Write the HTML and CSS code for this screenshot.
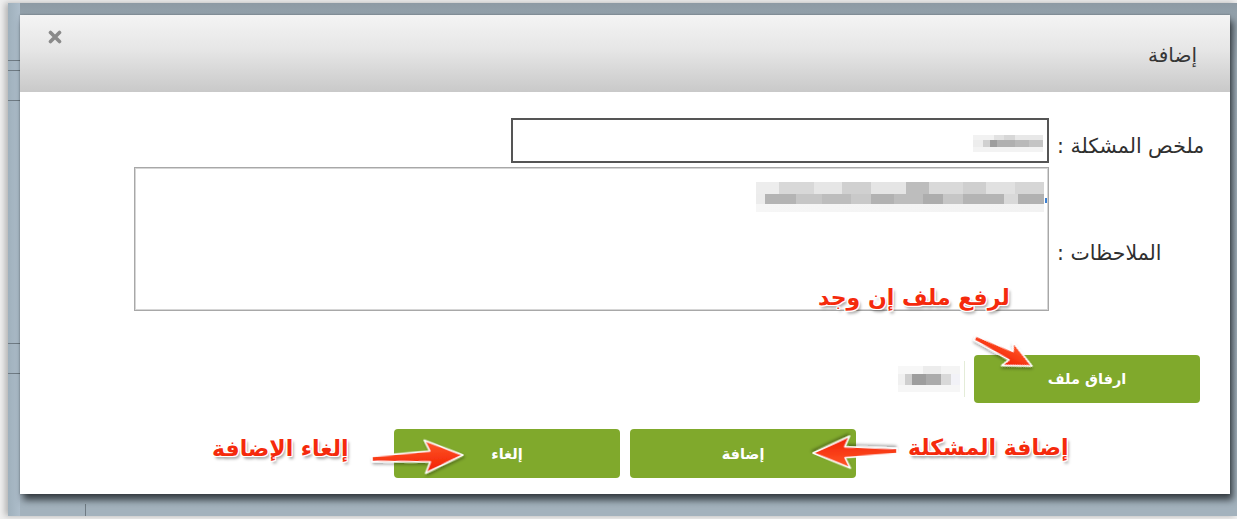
FILE: index.html
```html
<!DOCTYPE html>
<html lang="ar">
<head>
<meta charset="utf-8">
<title>إضافة</title>
<link rel="stylesheet" href="styles.css">
</head>
<body>
<div class="screen">
  <div class="modal" dir="rtl">
    <div class="modal-header">
      <h4 class="modal-title">إضافة</h4>
      <button class="close" type="button" aria-label="إغلاق">
        <svg width="14" height="14" viewBox="0 0 14 14"><path d="M2.5 2.5 L11.5 11.5 M11.5 2.5 L2.5 11.5" stroke="#8a8a8a" stroke-width="3.6" stroke-linecap="round"/></svg>
      </button>
    </div>
    <div class="modal-body">
      <div class="form-grid">
        <label class="form-label">ملخص المشكلة :</label>
        <div class="field">
          <div class="input"><span class="redacted redacted-short"></span></div>
        </div>
        <label class="form-label form-label-notes">الملاحظات :</label>
        <div class="field">
          <div class="textarea"><span class="redacted redacted-long"></span><span class="caret"></span></div>
        </div>
      </div>
      <div class="attach-row">
        <button class="btn btn-green" type="button">ارفاق ملف</button>
        <span class="file-name"><span class="redacted redacted-file"></span></span>
      </div>
      <div class="actions">
        <button class="btn btn-green" type="button">إضافة</button>
        <button class="btn btn-green" type="button">إلغاء</button>
      </div>
    </div>
  </div>
</div>

<!-- callout notes drawn over the dialog -->
<div class="note note-upload" dir="rtl">لرفع ملف إن وجد</div>
<div class="note note-add" dir="rtl">إضافة المشكلة</div>
<div class="note note-cancel" dir="rtl">إلغاء الإضافة</div>

<svg class="arrows" width="1237" height="519" viewBox="0 0 1237 519">
  <defs>
    <linearGradient id="arrowFill" x1="0" y1="0" x2="0" y2="1">
      <stop offset="0" stop-color="#ff5a2a"/>
      <stop offset="1" stop-color="#f21d00"/>
    </linearGradient>
    <filter id="arrowShadow" x="-20%" y="-40%" width="140%" height="180%">
      <feDropShadow dx="1" dy="2" stdDeviation="1.6" flood-color="#000" flood-opacity="0.35"/>
    </filter>
  </defs>
  <!-- toward the attach button -->
  <g transform="translate(975 338) rotate(26.2)" filter="url(#arrowShadow)">
    <path d="M0 -2.2 L40 -4.8 L36 -13 L63.5 0 L36 13 L40 4.8 L0 2.2 Z" fill="url(#arrowFill)" stroke="#fff" stroke-width="1.6" stroke-linejoin="round"/>
  </g>
  <!-- toward the add button -->
  <g transform="translate(897 451) rotate(178.6)" filter="url(#arrowShadow)">
    <path d="M0 -2.6 L52 -5.5 L47 -16 L84 0 L47 16 L52 5.5 L0 2.6 Z" fill="url(#arrowFill)" stroke="#fff" stroke-width="1.6" stroke-linejoin="round"/>
  </g>
  <!-- toward the cancel button -->
  <g transform="translate(372 459) rotate(-2.5)" filter="url(#arrowShadow)">
    <path d="M0 -2.6 L58 -5.5 L53 -16.5 L91 0 L53 16.5 L58 5.5 L0 2.6 Z" fill="url(#arrowFill)" stroke="#fff" stroke-width="1.6" stroke-linejoin="round"/>
  </g>
</svg>
</body>
</html>
```

FILE: styles.css
```css
* {
  box-sizing: border-box;
}

html,
body {
  margin: 0;
  padding: 0;
}

body {
  width: 1237px;
  height: 519px;
  overflow: hidden;
  background: #efefef;
  font-family: "DejaVu Sans", "Noto Sans", sans-serif;
  color: #333;
}

/* dimmed page behind the dialog */
.screen {
  margin: 3px 0 0 8px;
  height: 513px;
  padding: 12px 0 0 12px;
  background:
    linear-gradient(to bottom, transparent 57px, #6f7b84 57px, #6f7b84 58px, transparent 58px,
      transparent 67px, #6f7b84 67px, #6f7b84 68px, transparent 68px,
      transparent 97px, #6f7b84 97px, #6f7b84 98px, transparent 98px,
      transparent 340px, #6f7b84 340px, #6f7b84 341px, transparent 341px,
      transparent 370px, #6f7b84 370px, #6f7b84 371px, transparent 371px) left top / 12px 100% no-repeat,
    linear-gradient(to right, transparent 77px, #6f7b84 77px, #6f7b84 78px, transparent 78px) left bottom / 100% 12px no-repeat,
    linear-gradient(to right, #9fb0bc 0, #aebecb 12px, transparent 12px) left top / 12px 100% no-repeat,
    linear-gradient(to bottom, #8d9aa4 0, #94a2ac 14px, #a5b4bf 60px, #a3b2bd 100%);
  box-shadow: -3px 0 6px rgba(0, 0, 0, 0.25);
}

.modal {
  width: 1210px;
  background: #fff;
  box-shadow: 3px 6px 7px rgba(20, 26, 30, 0.75), 0 0 2px rgba(0, 0, 0, 0.3);
}

.modal-header {
  display: flex;
  justify-content: space-between;
  align-items: flex-start;
  height: 77px;
  padding: 0 33px 0 28px;
  background: linear-gradient(to bottom, #f4f4f4 0%, #e6e6e6 45%, #c9c9c9 100%);
}

.modal-title {
  margin: 28px 0 0;
  font-size: 20px;
  font-weight: normal;
  color: #363636;
}

.close {
  margin-top: 15px;
  padding: 0;
  border: 0;
  background: none;
  line-height: 0;
}

.modal-body {
  padding: 26px 25px 16px;
}

.form-grid {
  display: grid;
  grid-template-columns: 148px 1fr;
  column-gap: 8px;
  row-gap: 4px;
}

.form-label {
  align-self: center;
  padding-top: 10px;
  text-align: left;
  font-size: 20.5px;
  color: #2f2f2f;
  white-space: nowrap;
}

.form-label-notes {
  padding-top: 28px;
}

.input {
  display: flex;
  align-items: center;
  width: 538px;
  height: 45px;
  padding: 0 4px;
  border: 2px solid #555;
  background: #fff;
}

.textarea {
  position: relative;
  width: 915px;
  height: 144px;
  padding: 14px 4px 0;
  border: 1px solid #a8a8a8;
  box-shadow: inset 0 0 0 1px #d6d6d6;
  background: #fff;
}

/* blurred-out field contents */
.redacted {
  display: block;
  filter: blur(0.6px);
}

.redacted-short {
  width: 70px;
  height: 17px;
  margin-top: 5px;
  background:
    linear-gradient(to right, #ededed 0 14%, #d0d0d0 14% 24%, #9d9d9d 24% 34%, #b0b0b0 34% 60%, #b9b9b9 60% 80%, #c4c4c4 80%) 0 5px / 100% 7px no-repeat,
    linear-gradient(to right, #f2f2f2 0 30%, #e2e2e2 30% 45%, #d7d7d7 45% 60%, #e8e8e8 60%) 0 0 / 100% 5px no-repeat,
    linear-gradient(#f3f3f3, #f3f3f3);
}

.redacted-long {
  width: 288px;
  height: 30px;
  background:
    linear-gradient(to right, #ececec 0 3%, #b4b4b4 3% 14%, #c6c6c6 14% 23%, #bdbdbd 23% 33%, #c9c9c9 33% 40%, #b2b2b2 40% 48%, #bdbdbd 48% 58%, #adadad 58% 65%, #c6c6c6 65% 72%, #b4b4b4 72% 86%, #d9d9d9 86% 91%, #b1b1b1 91%) 0 12px / 100% 10px no-repeat,
    linear-gradient(to right, #ededed 0 8%, #d8d8d8 8% 20%, #e6e6e6 20% 30%, #d0d0d0 30% 40%, #e5e5e5 40% 52%, #bdbdbd 52% 60%, #d9d9d9 60% 72%, #cfcfcf 72% 80%, #e1e1e1 80% 90%, #d6d6d6 90%) 0 0 / 100% 12px no-repeat,
    linear-gradient(to right, #f6f6f6, #f2f2f2) 0 22px / 100% 8px no-repeat;
}

.caret {
  position: absolute;
  top: 30px;
  left: 910px;
  width: 2px;
  height: 5px;
  background: #3b7fd1;
}

.attach-row {
  display: flex;
  align-items: center;
  gap: 9px;
  margin-top: 44px;
  padding-right: 5px;
}

.file-name {
  display: flex;
  align-items: center;
  height: 36px;
  padding-right: 4px;
  border-right: 1px solid #e4ecd8;
}

.redacted-file {
  width: 62px;
  height: 26px;
  background:
    linear-gradient(to right, #f0f0f0 0 12%, #cfcfcf 12% 22%, #9e9e9e 22% 45%, #ababab 45% 70%, #d9d9d9 70% 85%, #f2f2f7 85%) 0 8px / 100% 11px no-repeat,
    linear-gradient(to right, #f7f7f7 0 40%, #ececec 40% 70%, #f4f4f4 70%) 0 0 / 100% 8px no-repeat,
    linear-gradient(#f6f6f6, #f6f6f6);
}

.actions {
  display: flex;
  gap: 10px;
  margin-top: 26px;
  padding-right: 349px;
}

.btn {
  width: 226px;
  height: 48px;
  padding: 0;
  border: 0;
  border-radius: 4px;
  font-family: "DejaVu Sans", sans-serif;
  font-size: 14.5px;
  font-weight: bold;
  color: #fff;
  cursor: pointer;
}

.actions .btn {
  height: 49px;
}

.btn-green {
  background: #80a92c;
}

/* red callouts */
.note {
  position: absolute;
  font-family: "DejaVu Sans", sans-serif;
  font-size: 22px;
  font-weight: bold;
  color: #f52a0c;
  white-space: nowrap;
  text-shadow:
    1px 0 0 #fff, -1px 0 0 #fff, 0 1px 0 #fff, 0 -1px 0 #fff,
    1px 1px 0 #fff, -1px -1px 0 #fff, 1px -1px 0 #fff, -1px 1px 0 #fff,
    2px 3px 3px rgba(0, 0, 0, 0.35);
}

.note-upload {
  left: 818px;
  top: 285px;
}

.note-add {
  left: 908px;
  top: 435px;
}

.note-cancel {
  left: 212px;
  top: 436px;
}

.arrows {
  position: absolute;
  left: 0;
  top: 0;
  pointer-events: none;
}
```
